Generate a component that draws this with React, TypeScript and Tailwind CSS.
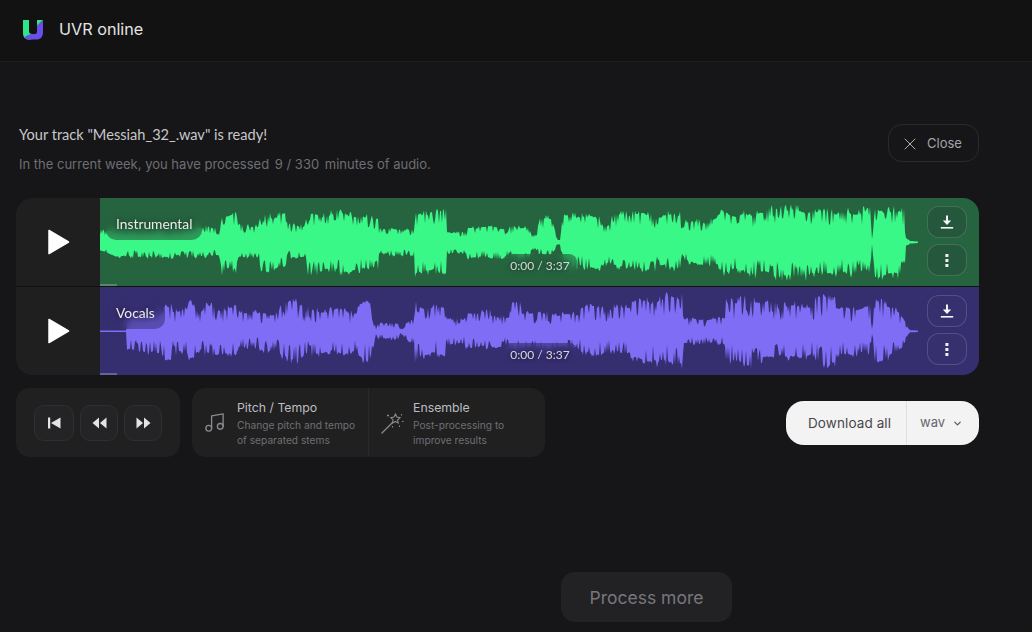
import { Music, X, ChevronDown } from "lucide-react";

type Point = [number, number, number];

// envelope of each track: [x on page, amp above centre, amp below centre]
const greenEnv: Point[] = [
  [100, 12, 9], [112, 12, 13], [130, 11, 17], [160, 11, 15], [190, 13, 16], [205, 18, 15], [219, 13, 13],
  [222, 31, 32], [236, 31, 32], [238, 18, 16], [258, 17, 15], [261, 31, 32], [285, 30, 31], [288, 18, 16],
  [305, 18, 16], [308, 31, 32], [340, 31, 32], [378, 27, 28], [379, 14, 13], [414, 14, 14], [415, 33, 34],
  [446, 32, 33], [447, 11, 11], [466, 11, 12], [467, 16, 17], [530, 16, 17], [531, 8, 9], [537, 8, 9],
  [539, 25, 12], [552, 27, 12], [558, 2, 2], [560, 2, 2], [563, 30, 28], [600, 26, 27], [601, 19, 22],
  [611, 21, 25], [612, 30, 28], [680, 30, 28], [681, 21, 20], [700, 23, 23], [718, 26, 27], [722, 33, 33],
  [735, 28, 29], [760, 35, 36], [815, 37, 38], [816, 32, 32], [870, 35, 35], [872, 3, 3], [875, 35, 36],
  [904, 35, 35], [906, 5, 5], [910, 1, 1], [918, 0.6, 0.6],
];

const purpleEnv: Point[] = [
  [100, 0.6, 0.6], [126, 0.6, 0.6], [127, 18, 22], [163, 20, 24], [165, 30, 30], [172, 30, 30], [173, 24, 25],
  [187, 23, 25], [189, 33, 32], [194, 26, 26], [200, 20, 20], [205, 27, 24], [215, 27, 24], [218, 25, 24],
  [236, 28, 29], [239, 20, 17], [258, 20, 17], [262, 20, 21], [278, 20, 21], [281, 30, 31], [300, 32, 31],
  [303, 24, 25], [340, 23, 24], [356, 20, 21], [360, 30, 29], [368, 35, 34], [372, 24, 24], [376, 3, 3],
  [378, 8, 8], [398, 8, 8], [400, 2, 2], [406, 9, 9], [414, 14, 14], [415, 36, 36], [420, 28, 28], [446, 24, 25],
  [447, 13, 13], [465, 13, 14], [466, 20, 18], [490, 21, 18], [491, 16, 16], [509, 16, 16], [511, 33, 21],
  [520, 33, 21], [522, 20, 18], [580, 18, 18], [581, 26, 24], [630, 26, 24], [632, 33, 30], [655, 33, 31],
  [657, 37, 36], [682, 37, 36], [684, 13, 13], [725, 14, 14], [726, 31, 31], [735, 32, 32], [755, 37, 37],
  [770, 31, 30], [782, 24, 24], [785, 29, 28], [814, 29, 28], [816, 36, 36], [835, 34, 34], [836, 26, 25],
  [870, 26, 25], [872, 3, 3], [875, 33, 32], [885, 31, 30], [898, 22, 22], [905, 12, 12], [908, 3, 3],
  [910, 0.8, 0.8], [918, 0.6, 0.6],
];

function interp(env: Point[], x: number, idx: 1 | 2) {
  for (let i = 0; i < env.length - 1; i++) {
    const a = env[i];
    const b = env[i + 1];
    if (x >= a[0] && x <= b[0]) return a[idx] + ((b[idx] - a[idx]) * (x - a[0])) / (b[0] - a[0]);
  }
  return 0.6;
}

// envelope with a slow swell and narrow notches, so the edge looks like real audio
function wavePath(env: Point[], seed: number, depth: number) {
  let s = seed;
  const rnd = () => {
    s = (s * 16807) % 2147483647;
    return s / 2147483647;
  };
  const edge = (amp: number, x: number, phase: number) => {
    if (amp < 3) return amp;
    const swell = 0.9 + 0.1 * Math.sin(x / 5.3 + phase) * Math.sin(x / 17 + phase * 2);
    const r = rnd();
    const notch = r < 0.3 ? 1 - depth * (0.45 + rnd() * 0.55) : r > 0.86 ? 1.14 : 0.94 + rnd() * 0.08;
    return Math.min(amp * 1.04, amp * swell * notch);
  };
  const top: string[] = [];
  const bottom: string[] = [];
  for (let x = 100; x <= 918; x++) {
    const up = edge(interp(env, x, 1), x, 0.4);
    const down = edge(interp(env, x, 2), x, 1.9);
    top.push(`${x - 100},${(44 - up).toFixed(1)}`);
    bottom.unshift(`${x - 100},${(44.5 + down).toFixed(1)}`);
  }
  return `M${top.join(" L")} L${bottom.join(" L")} Z`;
}

function PlayIcon() {
  return (
    <svg width="24" height="28" viewBox="0 0 24 28">
      <path d="M3 2.5 L22.5 14 L3 25.5 Z" fill="#fff" stroke="#fff" strokeWidth="1.5" strokeLinejoin="round" />
    </svg>
  );
}

function DownloadIcon() {
  return (
    <svg width="14" height="15" viewBox="0 0 14 15" fill="#f5f5f5">
      <path d="M6 0.5 H8 V5.5 H11.2 L7 10 L2.8 5.5 H6 Z" />
      <rect x="0.8" y="12" width="12.4" height="1.6" />
    </svg>
  );
}

function DotsIcon() {
  return (
    <svg width="4" height="13" viewBox="0 0 4 13" fill="#f0f0f0">
      <rect x="0.4" y="0" width="3" height="3" />
      <rect x="0.4" y="5" width="3" height="3" />
      <rect x="0.4" y="10" width="3" height="3" />
    </svg>
  );
}

function WandIcon() {
  return (
    <svg width="24" height="24" viewBox="0 0 24 24" fill="none" stroke="#8a8a8e" strokeWidth="1.1">
      <path d="M1.5 22.5 L13 11" strokeWidth="1.3" />
      <path d="M15.5 3 L16.8 6 L20 6.6 L17.6 9 L18.2 12 L15.4 10.4 L12.6 12 L13 9 L10.8 6.6 L14 6 Z" />
      <path d="M8 3.5 v2 M7 4.5 h2 M21.5 3 v1.5 M22 10.5 h1.5 M19.5 14.5 v1.5 M12.5 15 v1.5" />
    </svg>
  );
}

function Track({
  name,
  path,
  bg,
  wave,
  bar,
  button,
  glass,
}: {
  name: string;
  path: string;
  bg: string;
  wave: string;
  bar: string;
  button: string;
  glass: string;
}) {
  return (
    <div className="flex h-[88px]">
      <div className="w-[84px] flex items-center justify-center bg-[#1f1f1f]">
        <PlayIcon />
      </div>
      <div className={`relative flex-1 ${bg}`}>
        <svg width="879" height="88" viewBox="0 0 879 88" className="block">
          <path d={path} fill={wave} />
        </svg>
        <div className={`absolute left-0 bottom-0 h-[2px] w-[17px] ${bar}`} />
        <div className={`absolute left-[6px] top-[14px] h-[28px] rounded-[10px] backdrop-blur-[4px] text-[13.8px] text-[#ececec] leading-[24px] px-[10px] font-['Lato',sans-serif] [text-shadow:0_0_4px_rgba(0,0,0,0.55)] ${glass}`}>
          {name}
        </div>
        <div className={`absolute left-[403px] top-[56px] w-[74px] h-[23px] rounded-[8px] backdrop-blur-[4px] text-[12px] text-[#d8d8d8] leading-[23px] text-center font-['Lato',sans-serif] [text-shadow:0_0_4px_rgba(0,0,0,0.55)] ${glass}`}>
          0:00 / 3:37
        </div>
        <div className="absolute right-[12px] top-[8px] flex flex-col gap-[6px]">
          <button className={`w-[40px] h-[32px] rounded-[12px] border border-white/15 flex items-center justify-center ${button}`}>
            <DownloadIcon />
          </button>
          <button className={`w-[40px] h-[32px] rounded-[12px] border border-white/15 flex items-center justify-center ${button}`}>
            <DotsIcon />
          </button>
        </div>
      </div>
    </div>
  );
}

function IconButton({ width, children }: { width: string; children: React.ReactNode }) {
  return (
    <button className={`h-[36px] ${width} rounded-[10px] bg-[#242426] border border-[#2f2f31] flex items-center justify-center`}>
      {children}
    </button>
  );
}

export default function App() {
  return (
    <div className="w-[1032px] h-[632px] overflow-hidden bg-[#161618] font-['Inter',sans-serif]">
      <header className="h-[62px] bg-[#121212] border-b border-[#1f1f1f] flex items-center pl-[23px] pb-[2px] gap-[16px]">
        <svg width="20" height="20" viewBox="0 0 20 20">
          <path d="M0 0 H6 V11 C6 13 7 14 9 14 H12 L8 19.5 H6 C2 19.5 0 17 0 13 Z" fill="#2fe58a" />
          <path d="M12 14 C13.5 14 14 13 14 11 V5 L20 0 V12 C20 17 17.5 19.5 13.5 19.5 H5 C3.5 19.5 2.5 18.5 1.5 17 C4 15.5 6 14 9 14 Z" fill="#6a4fe6" />
          <path d="M14 0 H20 L14 5.5 Z" fill="#2fe58a" />
        </svg>
        <span className="text-[16.2px] text-[#e4e4e4]">UVR online</span>
      </header>

      <main className="px-[16px]">
        <div className="flex items-start justify-between w-[963px] pt-[62px] pl-[3px]">
          <div>
            <p className="text-[14.6px] text-[#c8c8cb] leading-[22px] font-['Lato',sans-serif]">Your track "Messiah_32_.wav" is ready!</p>
            <p className="text-[13px] text-[#6e6e73] leading-[20px] mt-[8px]">
              In the current week, you have processed <span className="mx-[2px]">9 / 330</span> minutes of audio.
            </p>
          </div>
          <button className="w-[91px] h-[38px] rounded-[14px] border border-[#2a2a2c] flex items-center pl-[11px] pt-[1px] gap-[7px] text-[13px] text-[#a4a4a8]">
            <X size={20} strokeWidth={1.2} color="#b0b0b4" />
            Close
          </button>
        </div>

        <div className="mt-[24px] w-[963px] rounded-[16px] overflow-hidden flex flex-col gap-px bg-[#111]">
          <Track
            name="Instrumental"
            path={wavePath(greenEnv, 4711, 0.45)}
            bg="bg-[#26633f]"
            wave="#39f887"
            bar="bg-[#57876b]"
            button="bg-[#24533a]/70"
            glass="bg-[#26633f]/60"
          />
          <Track
            name="Vocals"
            path={wavePath(purpleEnv, 911, 0.6)}
            bg="bg-[#352e6f]"
            wave="#7f6df5"
            bar="bg-[#6a619a]"
            button="bg-[#39326e]/70"
            glass="bg-[#352e6f]/50"
          />
        </div>

        <div className="mt-[13px] flex items-center w-[963px]">
          <div className="w-[164px] h-[69px] rounded-[14px] bg-[#202021] flex items-center gap-[6px] pl-[18px]">
            <IconButton width="w-[40px]">
              <svg width="13" height="12" viewBox="0 0 13 12" fill="#e4e4e4">
                <rect x="0" y="0.5" width="2.2" height="11" />
                <path d="M12.5 0.5 V11.5 L3 6 Z" />
              </svg>
            </IconButton>
            <IconButton width="w-[38px]">
              <svg width="15" height="12" viewBox="0 0 15 12" fill="#e4e4e4">
                <path d="M7 0.5 V11.5 L0.5 6 Z" />
                <path d="M14.5 0.5 V11.5 L8 6 Z" />
              </svg>
            </IconButton>
            <IconButton width="w-[38px]">
              <svg width="15" height="12" viewBox="0 0 15 12" fill="#e4e4e4">
                <path d="M0.5 0.5 V11.5 L7 6 Z" />
                <path d="M8 0.5 V11.5 L14.5 6 Z" />
              </svg>
            </IconButton>
          </div>

          <div className="ml-[12px] w-[353px] h-[69px] rounded-[14px] bg-[#202021] flex">
            <div className="w-[177px] flex items-center border-r border-[#2a2a2c] pl-[11px]">
              <Music size={23} strokeWidth={1.4} color="#8a8a8e" />
              <div className="ml-[11px] pt-[3px]">
                <div className="text-[12.3px] text-[#bdbdc0] leading-[16px]">Pitch / Tempo</div>
                <div className="text-[10.2px] text-[#6f6f73] leading-[15px] mt-[2px]">
                  Change pitch and tempo
                  <br />
                  of separated stems
                </div>
              </div>
            </div>
            <div className="flex-1 flex items-center pl-[11px]">
              <WandIcon />
              <div className="ml-[9px] pt-[3px]">
                <div className="text-[12.3px] text-[#bdbdc0] leading-[16px]">Ensemble</div>
                <div className="text-[10.2px] text-[#6f6f73] leading-[15px] mt-[2px]">
                  Post-processing to
                  <br />
                  improve results
                </div>
              </div>
            </div>
          </div>

          <div className="ml-auto w-[193px] h-[44px] rounded-[18px] bg-[#f3f3f3] flex items-center">
            <div className="w-[121px] h-full flex items-center pl-[22px] pt-[1px] border-r border-[#e0e0e0] text-[13.5px] text-[#47474a] tracking-[0.1px]">
              Download all
            </div>
            <div className="flex-1 flex items-center pl-[13px] pt-[1px] gap-[7px] text-[13px] text-[#66666a]">
              wav
              <ChevronDown size={11} strokeWidth={2.6} color="#55555a" />
            </div>
          </div>
        </div>

        <div className="mt-[115px] ml-[545px]">
          <button className="w-[171px] h-[50px] rounded-[14px] bg-[#222224] pt-[2px] text-[17.5px] text-[#77777c]">
            Process more
          </button>
        </div>
      </main>
    </div>
  );
}
